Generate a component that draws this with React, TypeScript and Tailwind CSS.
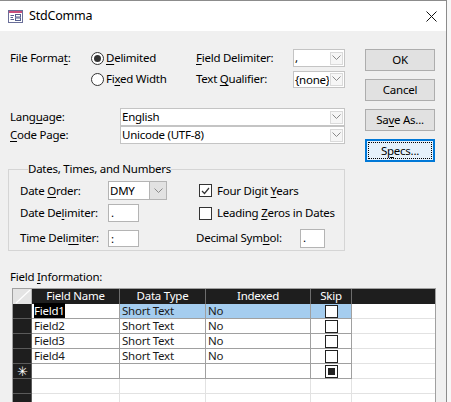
import React from "react";

const font = { fontFamily: '"Noto Sans", "Open Sans", sans-serif' };

function U({ children }: { children: React.ReactNode }) {
  return <span className="underline decoration-1 underline-offset-[2px]">{children}</span>;
}

function Chevron() {
  return (
    <svg width="9" height="6" viewBox="0 0 9 6" className="block">
      <path d="M0.5 0.5 L4.5 4.5 L8.5 0.5" fill="none" stroke="#8a8a8a" strokeWidth="1" />
    </svg>
  );
}

function Combo({ value, className }: { value: string; className: string }) {
  return (
    <div className={"flex bg-white border border-[#c4c4c4] " + className}>
      <div className="flex-1 pl-[1px] leading-[15px] overflow-hidden">{value}</div>
      <div className="w-[15px] flex items-center justify-center">
        <div className="w-[13px] h-[13px] border border-[#dadada] bg-[#f6f6f6] flex items-center justify-center">
          <Chevron />
        </div>
      </div>
    </div>
  );
}

function Radio({ checked }: { checked?: boolean }) {
  return (
    <div className="w-[13px] h-[13px] rounded-full border border-[#333] bg-white flex items-center justify-center shrink-0">
      {checked && <div className="w-[7px] h-[7px] rounded-full bg-[#333]" />}
    </div>
  );
}

function Check({ checked }: { checked?: boolean }) {
  return (
    <div className="w-[13px] h-[13px] border border-[#333] bg-white flex items-center justify-center shrink-0">
      {checked && (
        <svg width="9" height="8" viewBox="0 0 9 8">
          <path d="M1 4 L3.5 6.5 L8 1" fill="none" stroke="#333" strokeWidth="1.2" />
        </svg>
      )}
    </div>
  );
}

function Btn({ children, focused }: { children: React.ReactNode; focused?: boolean }) {
  if (focused)
    return (
      <div className="w-[70px] h-[23px] border-2 border-[#0078d7] bg-[#e5f1fb] p-[1px]">
        <div className="h-full border border-dotted border-black flex items-center justify-center">{children}</div>
      </div>
    );
  return (
    <div className="w-[70px] h-[22px] border border-[#adadad] bg-[#e1e1e1] flex items-center justify-center">
      {children}
    </div>
  );
}

function TextBox({ value, className }: { value: string; className: string }) {
  return (
    <div className={"bg-white border border-[#b4b4b4] pl-[2px] leading-[15px] " + className}>{value}</div>
  );
}

type Row = { name: string; type: string; idx: string; skip: "empty" | "new" | "none"; sel?: boolean; star?: boolean };

const rows: Row[] = [
  { name: "Field1", type: "Short Text", idx: "No", skip: "empty", sel: true },
  { name: "Field2", type: "Short Text", idx: "No", skip: "empty" },
  { name: "Field3", type: "Short Text", idx: "No", skip: "empty" },
  { name: "Field4", type: "Short Text", idx: "No", skip: "empty" },
  { name: "", type: "", idx: "", skip: "new", star: true },
  { name: "", type: "", idx: "", skip: "none" },
  { name: "", type: "", idx: "", skip: "none" },
];

function Grid() {
  return (
    <div className="ml-[12px] w-[424px] border-l border-t border-r border-[#a0a0a0]">
      <div className="flex h-[15px] bg-[#1e1e1e] text-white leading-[14px]">
        <div className="w-[19px] bg-[#e4e4e4] border-r border-[#b5b5b5]">
          <svg width="18" height="15" viewBox="0 0 18 15" className="block">
            <path d="M3 14 L17 1" stroke="#ffffff" strokeWidth="1.2" />
          </svg>
        </div>
        <div className="w-[88px] border-r border-[#6d6d6d] text-center">Field Name</div>
        <div className="w-[86px] border-r border-[#6d6d6d] text-center">Data Type</div>
        <div className="w-[105px] border-r border-[#6d6d6d] text-center">Indexed</div>
        <div className="w-[41px] border-r border-[#6d6d6d] text-center">Skip</div>
        <div className="flex-1" />
      </div>
      {rows.map((r, i) => {
        const filled = i < 5;
        const line = filled ? "border-[#a0a0a0]" : "border-[#e2e2e2]";
        const cell = "h-full border-r border-b pl-[2px] " + line;
        const blue = r.sel ? " bg-[#a5cdef]" : " bg-white";
        return (
          <div key={i} className="flex h-[15px] leading-[14px] text-[#1a1a1a]">
            <div className="w-[19px] h-full bg-[#1e1e1e] border-r border-b border-[#5a5a5a] flex items-center justify-center text-white text-[13px]">
              {r.star ? "✳" : ""}
            </div>
            <div className={"w-[88px] bg-white " + cell}>
              {r.sel ? <span className="bg-black text-white">{r.name}</span> : r.name}
            </div>
            <div className={"w-[86px]" + blue + " " + cell}>{r.type}</div>
            <div className={"w-[105px]" + blue + " " + cell}>{r.idx}</div>
            <div className={"w-[41px] flex items-center justify-center" + blue + " h-full border-r border-b " + line}>
              {r.skip !== "none" && (
                <div className="w-[13px] h-[13px] border border-[#222] bg-white flex items-center justify-center">
                  {r.skip === "new" && <div className="w-[7px] h-[7px] bg-[#222]" />}
                </div>
              )}
            </div>
            <div className="flex-1 h-full bg-white border-b border-[#e2e2e2]" />
          </div>
        );
      })}
    </div>
  );
}

export default function App() {
  return (
    <div
      className="w-[451px] h-[402px] overflow-hidden flex bg-[#f7f7f7] text-[11.5px] tracking-[-0.25px] whitespace-nowrap text-black"
      style={font}
    >
      <div className="w-[447px] h-full flex flex-col border-r border-t border-[#8c8c8c]">
        <div className="h-[30px] bg-white flex items-center shrink-0">
          <svg width="15" height="13" viewBox="0 0 15 13" className="ml-[8px] mt-[1px]">
            <rect x="0.5" y="0.5" width="14" height="12" fill="#fff" stroke="#6a6f99" />
            <rect x="1" y="1" width="13" height="2" fill="#c94f7c" />
            <path d="M2.5 5.5 H6 M2.5 7.5 H5 M2.5 9.5 H6" stroke="#56608f" />
            <rect x="7.5" y="4.5" width="5" height="2.5" fill="none" stroke="#56608f" />
            <rect x="7.5" y="8" width="5" height="2.5" fill="none" stroke="#56608f" />
          </svg>
          <span className="ml-[6px] text-[12.5px] tracking-[-0.2px]">StdComma</span>
          <svg width="11" height="11" viewBox="0 0 11 11" className="ml-auto mr-[9px]">
            <path d="M0.5 0.5 L10.5 10.5 M10.5 0.5 L0.5 10.5" stroke="#111" strokeWidth="1" />
          </svg>
        </div>
        <div className="flex-1 bg-[#f0f0f0] flex flex-col">
          <div className="flex">
            <div className="w-[356px] pl-[10px] pt-[18px]">
              <div className="flex items-center h-[18px]">
                <div className="w-[81px]">File Forma<U>t</U>:</div>
                <div className="w-[105px] flex items-center">
                  <Radio checked />
                  <span className="ml-[2px]"><U>D</U>elimited</span>
                </div>
                <div className="w-[97px]"><U>F</U>ield Delimiter:</div>
                <Combo value="," className="w-[52px] h-[18px]" />
              </div>
              <div className="flex items-center h-[18px] mt-[3px]">
                <div className="w-[81px]" />
                <div className="w-[105px] flex items-center">
                  <Radio />
                  <span className="ml-[2px]">Fi<U>x</U>ed Width</span>
                </div>
                <div className="w-[97px]">Text <U>Q</U>ualifier:</div>
                <Combo value="{none}" className="w-[52px] h-[17px]" />
              </div>
              <div className="flex items-center h-[18px] mt-[20px]">
                <div className="w-[110px]">Lang<U>u</U>age:</div>
                <Combo value="English" className="w-[225px] h-[18px]" />
              </div>
              <div className="flex items-center h-[18px]">
                <div className="w-[110px]"><U>C</U>ode Page:</div>
                <Combo value="Unicode (UTF-8)" className="w-[225px] h-[18px]" />
              </div>
              <fieldset className="ml-[-2px] mt-[17px] w-[337px] border border-[#d5d5d5] pl-[11px] pb-[3px]">
                <legend className="ml-[8px] leading-[16px]">Dates, Times, and Numbers</legend>
                <div className="flex items-center h-[19px] mt-[4px]">
                  <div className="w-[88px]">Date <U>O</U>rder:</div>
                  <div className="w-[59px] h-[19px] flex bg-white border border-[#b4b4b4]">
                    <div className="flex-1 pl-[1px] leading-[17px]">DMY</div>
                    <div className="w-[17px] bg-[#e2e2e2] border-l border-[#b4b4b4] flex items-center justify-center">
                      <Chevron />
                    </div>
                  </div>
                  <div className="ml-[32px] flex items-center">
                    <Check checked />
                    <span className="ml-[5px]">Four Digit <U>Y</U>ears</span>
                  </div>
                </div>
                <div className="flex items-center h-[18px] mt-[4px]">
                  <div className="w-[88px]">Date De<U>l</U>imiter:</div>
                  <TextBox value="." className="w-[31px] h-[18px]" />
                  <div className="ml-[60px] flex items-center">
                    <Check />
                    <span className="ml-[5px]">Leading <U>Z</U>eros in Dates</span>
                  </div>
                </div>
                <div className="flex items-center h-[18px] mt-[7px]">
                  <div className="w-[88px]">Time Deli<U>m</U>iter:</div>
                  <TextBox value=":" className="w-[31px] h-[17px]" />
                  <div className="ml-[57px] w-[104px]">Decimal Sym<U>b</U>ol:</div>
                  <TextBox value="." className="w-[25px] h-[19px]" />
                </div>
              </fieldset>
            </div>
            <div className="flex flex-col gap-[8px] pt-[18px] pl-[9px]">
              <Btn>OK</Btn>
              <Btn>Cancel</Btn>
              <Btn>Sa<U>v</U>e As...</Btn>
              <Btn focused>S<U>p</U>ecs...</Btn>
            </div>
          </div>
          <div className="pl-[10px] mt-[18px] leading-[16px]">Field <U>I</U>nformation:</div>
          <div className="mt-[3px]">
            <Grid />
          </div>
        </div>
      </div>
      <div className="flex-1" />
    </div>
  );
}
